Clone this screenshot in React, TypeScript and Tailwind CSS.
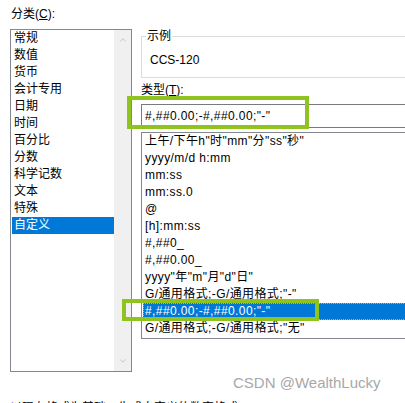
import { ChevronUp, ChevronDown } from "lucide-react";

const font = "font-['Liberation_Sans','Noto_Sans_CJK_SC',sans-serif]";

const categories = [
  "常规",
  "数值",
  "货币",
  "会计专用",
  "日期",
  "时间",
  "百分比",
  "分数",
  "科学记数",
  "文本",
  "特殊",
  "自定义",
];

const formats = [
  '上午/下午h"时"mm"分"ss"秒"',
  "yyyy/m/d h:mm",
  "mm:ss",
  "mm:ss.0",
  "@",
  "[h]:mm:ss",
  "#,##0_",
  "#,##0.00_",
  'yyyy"年"m"月"d"日"',
  'G/通用格式;-G/通用格式;"-"',
  '#,##0.00;-#,##0.00;"-"',
  'G/通用格式;-G/通用格式;"无"',
];

export default function App() {
  return (
    <div className={`${font} relative w-[405px] h-[403px] overflow-hidden bg-white text-[12px] text-black`}>
      <div className="flex h-[372px]">
        {/* category list */}
        <div className="ml-[10px] w-[122px] shrink-0">
          <div className="pt-[6px] pl-[1px] h-[23px] leading-[17px]">
            分类(<span className="underline">C</span>):
          </div>
          <div className="mt-[6px] h-[343px] border border-[#828790] flex">
            <div className="flex-1 pl-[1px]">
              {categories.map((c) => (
                <div
                  key={c}
                  className={`h-[17px] leading-[17px] pl-[2px] ${
                    c === "自定义" ? "bg-[#0078d7] text-white" : ""
                  }`}
                >
                  {c}
                </div>
              ))}
            </div>
            <div className="w-[17px] bg-[#f0f0f0] flex flex-col items-center justify-between py-[5px]">
              <ChevronUp size={10} strokeWidth={2.5} className="text-[#cdcdcd]" />
              <ChevronDown size={10} strokeWidth={2.5} className="text-[#cdcdcd]" />
            </div>
          </div>
        </div>

        {/* right side */}
        <div className="ml-[9px] flex-1 min-w-0">
          <fieldset className="mt-[28px] w-[300px] border border-[#dcdcdc]">
            <legend className="ml-[4px] px-[1px] leading-[16px]">示例</legend>
            <div className="h-[33px] pl-[8px] pt-[8px] leading-[17px]">CCS-120</div>
          </fieldset>
          <div className="mt-[4px] h-[17px] leading-[17px]">
            类型(<span className="underline">T</span>):
          </div>
          <div className="mt-[5px] w-[300px] h-[24px] border border-[#7a7a7a] pl-[3px] leading-[22px] tracking-[0.4px]">
            #,##0.00;-#,##0.00;"-"
          </div>
          <div className="mt-[4px] w-[300px] h-[207px] border border-[#828790] tracking-[0.4px]">
            {formats.map((f, i) =>
              i === 10 ? (
                <div
                  key={f}
                  className="ml-[1px] h-[17px] leading-[15px] pl-[1px] bg-[#0078d7] text-white border border-dotted border-[#e0a850]"
                >
                  {f}
                </div>
              ) : (
                <div key={f} className="h-[17px] leading-[17px] pl-[3px]">
                  {f}
                </div>
              )
            )}
          </div>
        </div>
      </div>

      <div className="mt-[28px] pl-[10px] leading-[17px] whitespace-nowrap">
        以现有格式为基础，生成自定义的数字格式。
      </div>

      {/* annotation boxes */}
      <div className="absolute left-[127px] top-[96px] w-[182px] h-[33px] border-[4px] border-[#8fc31f]" />
      <div className="absolute left-[122px] top-[299px] w-[197px] h-[22px] border-[4px] border-[#8fc31f]" />

      {/* watermark */}
      <div className="absolute left-[233px] top-[373px] text-[15px] leading-[20px] text-[#a8a8a8] font-['Liberation_Sans',sans-serif]">
        CSDN @WealthLucky
      </div>
    </div>
  );
}
